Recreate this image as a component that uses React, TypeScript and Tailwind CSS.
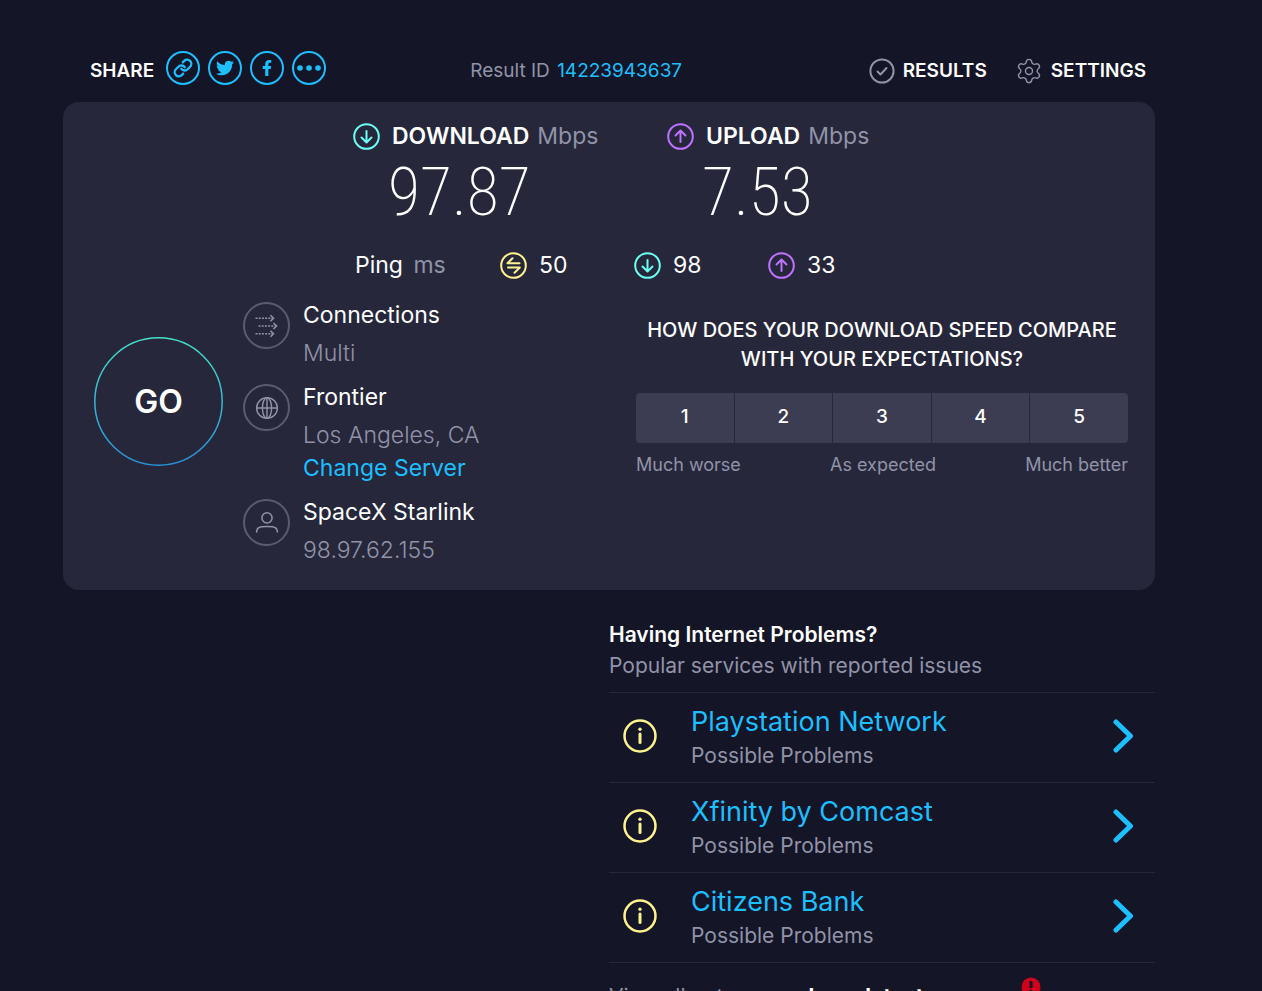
import type { ReactNode } from "react";
import { Link, Settings } from "lucide-react";
import { FaFacebookF, FaTwitter } from "react-icons/fa";

const ratings = [1, 2, 3, 4, 5];

const services = ["Playstation Network", "Xfinity by Comcast", "Citizens Bank"];

function ArrowIcon({ up = false }: { up?: boolean }) {
  return (
    <svg
      viewBox="0 0 27 27"
      fill="none"
      stroke="currentColor"
      strokeWidth="2"
      strokeLinecap="round"
      strokeLinejoin="round"
      className={up ? "size-[27px] shrink-0 text-[#bf71ff]" : "size-[27px] shrink-0 text-[#6afff3]"}
    >
      <circle cx="13.5" cy="13.5" r="12.3" />
      {up ? <path d="M13.5 19V8M8.5 12.5l5-5 5 5" /> : <path d="M13.5 8v11M8.5 14.5l5 5 5-5" />}
    </svg>
  );
}

function PingIcon() {
  return (
    <svg
      viewBox="0 0 27 27"
      fill="none"
      stroke="currentColor"
      strokeWidth="2"
      strokeLinecap="round"
      strokeLinejoin="round"
      className="size-[27px] shrink-0 text-[#fff38e]"
    >
      <circle cx="13.5" cy="13.5" r="12.3" />
      <path d="M12.5 6.2L7.5 11.3H19.5M8 15.6H19.8L14.5 20.8" />
    </svg>
  );
}

function ConnectionsIcon() {
  return (
    <svg viewBox="0 0 24 24" fill="none" stroke="currentColor" strokeWidth="1.6" className="size-6">
      <path d="M.5 4.2h17M3.5 12h17M.5 19.8h17" strokeDasharray="2 1.2" />
      <path d="M15.5 1.2l3 3-3 3M18.5 9l3 3-3 3M15.5 16.8l3 3-3 3" />
    </svg>
  );
}

function GlobeIcon() {
  return (
    <svg viewBox="0 0 24 24" fill="none" stroke="currentColor" strokeWidth="1.4" className="size-6">
      <circle cx="12" cy="12" r="10.4" />
      <ellipse cx="12" cy="12" rx="4.6" ry="10.4" />
      <path d="M1.6 12h20.8M12 1.6v20.8" />
    </svg>
  );
}

function PersonIcon() {
  return (
    <svg
      viewBox="0 0 24 24"
      fill="none"
      stroke="currentColor"
      strokeWidth="1.5"
      strokeLinecap="round"
      className="size-6"
    >
      <circle cx="12" cy="6.8" r="5.1" />
      <path d="M1.6 21c0-3 2-4.8 5-5.2 3.5-.4 7.3-.4 10.8 0 3 .4 5 2.2 5 5.2" />
    </svg>
  );
}

function ShareButton({ label, children }: { label: string; children: ReactNode }) {
  return (
    <button
      aria-label={label}
      className="flex size-[34px] items-center justify-center rounded-full border-2 border-[#1cbfff] text-[#1cbfff]"
    >
      {children}
    </button>
  );
}

function SpeedResult({ title, value, up }: { title: string; value: string; up?: boolean }) {
  return (
    <div className="w-[314px]">
      <div className="flex h-8 items-center text-[23px]">
        <ArrowIcon up={up} />
        <span className="ml-3 font-semibold">{title}</span>
        <span className="ml-2 text-[#9193a8]">Mbps</span>
      </div>
      <div className="ml-[35px] flex h-20 items-center font-['Roboto_Condensed','Roboto',sans-serif] text-[66px] font-extralight">
        {value}
      </div>
    </div>
  );
}

function PingValue({ icon, value }: { icon: ReactNode; value: number }) {
  return (
    <div className="flex w-[134px] items-center gap-3">
      {icon}
      <span>{value}</span>
    </div>
  );
}

function InfoRow({ icon, title, detail, children }: { icon: ReactNode; title: string; detail: string; children?: ReactNode }) {
  return (
    <div className="flex gap-[13px]">
      <div className="mt-1.5 flex size-[47px] shrink-0 items-center justify-center rounded-full border-2 border-[#5b5c71] text-[#9193a8]">
        {icon}
      </div>
      <div className="text-[23px] leading-[38px]">
        <p>{title}</p>
        <p className="font-light text-[#9193a8]">{detail}</p>
        {children}
      </div>
    </div>
  );
}

export default function App() {
  return (
    <div className="h-screen overflow-hidden bg-[#141526] pr-[107px] pl-[63px] font-['Inter',sans-serif] text-white">

      {/* HEADER */}

      <header className="flex items-end pt-[51px] pr-[9px] pb-[17px] pl-[27px] text-[19px] leading-7">
        <div className="flex items-end gap-2">
          <span className="mr-1 font-semibold">SHARE</span>
          <ShareButton label="Copy link">
            <Link size={20} strokeWidth={2.8} />
          </ShareButton>
          <ShareButton label="Twitter">
            <FaTwitter size={18} />
          </ShareButton>
          <ShareButton label="Facebook">
            <FaFacebookF size={16} />
          </ShareButton>
          <ShareButton label="More">
            <svg viewBox="0 0 24 6" fill="currentColor" className="w-6 shrink-0">
              <circle cx="3" cy="3" r="2.8" />
              <circle cx="12" cy="3" r="2.8" />
              <circle cx="21" cy="3" r="2.8" />
            </svg>
          </ShareButton>
        </div>

        <p className="ml-36 text-[#9193a8]">
          Result ID{" "}
          <a href="#result" className="ml-0.5 text-[#1cbfff]">14223943637</a>
        </p>

        <nav className="ml-auto flex items-center gap-7 font-semibold">
          <a href="#results" className="flex items-center gap-2">
            <svg
              viewBox="0 0 26 26"
              fill="none"
              stroke="currentColor"
              strokeWidth="2"
              strokeLinecap="round"
              strokeLinejoin="round"
              className="size-[26px] text-[#9193a8]"
            >
              <circle cx="13" cy="13" r="11.6" />
              <path d="M8.5 13.5l3 3 6-6.5" />
            </svg>
            RESULTS
          </a>
          <a href="#settings" className="flex items-center gap-2">
            <Settings size={28} strokeWidth={1.2} className="text-[#9193a8]" />
            SETTINGS
          </a>
        </nav>
      </header>

      {/* RESULT CARD */}

      <main className="rounded-2xl bg-[#26273b] pt-[18px] pb-[21px]">
        <div className="flex pl-[290px]">
          <SpeedResult title="DOWNLOAD" value="97.87" />
          <SpeedResult title="UPLOAD" value="7.53" up />
        </div>

        <div className="mt-[17px] flex h-8 items-center pl-[292px] text-[23px]">
          <div className="w-[145px]">
            Ping <span className="ml-1 text-[#9193a8]">ms</span>
          </div>
          <PingValue icon={<PingIcon />} value={50} />
          <PingValue icon={<ArrowIcon />} value={98} />
          <PingValue icon={<ArrowIcon up />} value={33} />
        </div>

        <div className="mt-[15px] flex items-start pr-[27px] pl-[31px]">
          <button className="relative mt-[41px] flex size-[129px] shrink-0 items-center justify-center text-[32px] font-semibold">
            <svg viewBox="0 0 129 129" fill="none" className="absolute inset-0 size-full">
              <defs>
                <linearGradient id="ring" x1="0" y1="0" x2="0" y2="1">
                  <stop offset="0" stopColor="#45e0c8" />
                  <stop offset="1" stopColor="#2a8fd8" />
                </linearGradient>
              </defs>
              <circle cx="64.5" cy="64.5" r="63.7" stroke="url(#ring)" strokeWidth="1.5" />
            </svg>
            GO
          </button>

          <div className="ml-5 flex flex-col gap-1.5">
            <InfoRow icon={<ConnectionsIcon />} title="Connections" detail="Multi" />
            <InfoRow icon={<GlobeIcon />} title="Frontier" detail="Los Angeles, CA">
              <a href="#servers" className="block h-[33px] leading-7 text-[#1cbfff]">Change Server</a>
            </InfoRow>
            <InfoRow icon={<PersonIcon />} title="SpaceX Starlink" detail="98.97.62.155" />
          </div>

          <section className="mt-5 ml-auto w-[492px]">
            <h2 className="text-center text-xl leading-[29px] font-medium">
              HOW DOES YOUR DOWNLOAD SPEED COMPARE WITH YOUR EXPECTATIONS?
            </h2>
            <div className="mt-[19px] grid grid-cols-5 gap-px overflow-hidden rounded-sm">
              {ratings.map((n) => (
                <button key={n} className="h-[50px] bg-[#3c3c52] pb-0.5 text-[19px] font-medium">
                  {n}
                </button>
              ))}
            </div>
            <div className="mt-3 flex justify-between text-lg leading-5 text-[#9193a8]">
              <span>Much worse</span>
              <span>As expected</span>
              <span>Much better</span>
            </div>
          </section>
        </div>
      </main>

      {/* REPORTED ISSUES */}

      <section className="mt-[30px] ml-auto w-1/2 text-[21px]">
        <h2 className="leading-[30px] font-semibold">Having Internet Problems?</h2>
        <p className="pb-2.5 leading-8 text-[#9193a8]">Popular services with reported issues</p>

        <ul>
          {services.map((name) => (
            <li key={name} className="border-t border-[#26273b]">
              <a href="#service" className="flex h-[89px] items-center pr-[21px] pb-1 pl-3.5">
                <svg viewBox="0 0 34 34" fill="none" stroke="#fff38e" strokeLinecap="round" className="size-[34px] shrink-0">
                  <circle cx="17" cy="17" r="15.5" strokeWidth="2.5" />
                  <path d="M17 15v8.5" strokeWidth="3" />
                  <circle cx="17" cy="10.2" r="1.7" fill="#fff38e" stroke="none" />
                </svg>
                <span className="ml-[34px] flex flex-col pt-1.5 leading-[34px]">
                  <span className="text-[27px] text-[#1cbfff]">{name}</span>
                  <span className="text-[#9193a8]">Possible Problems</span>
                </span>
                <svg
                  viewBox="0 0 21 34"
                  fill="none"
                  stroke="#1cbfff"
                  strokeWidth="5"
                  strokeLinecap="round"
                  strokeLinejoin="round"
                  className="ml-auto h-[34px] w-[21px]"
                >
                  <path d="M3 3l14.500 14L3 31" />
                </svg>
              </a>
            </li>
          ))}
        </ul>

        <div className="flex items-start border-t border-[#26273b] pt-3.5">
          <p className="mt-1.5 w-[192px] leading-7 text-[#9193a8]">View all outages on</p>
          <p className="mt-1.5 leading-7 font-bold">downdetector</p>
          <svg viewBox="0 0 20 20" className="ml-auto mr-[114px] size-5">
            <circle cx="10" cy="10" r="9.5" fill="#d0021b" />
            <path d="M10 4v7" stroke="#141526" strokeWidth="3" />
            <circle cx="10" cy="14.5" r="1.7" fill="#141526" />
          </svg>
        </div>
      </section>

    </div>
  );
}
